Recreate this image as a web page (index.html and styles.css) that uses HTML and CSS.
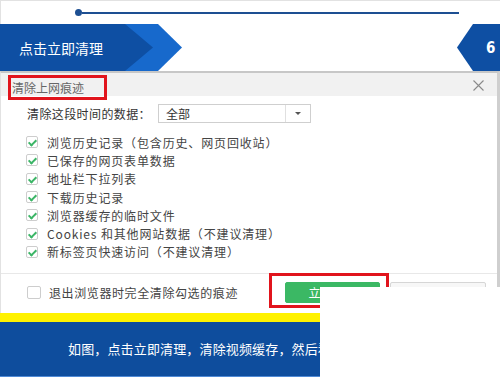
FILE: index.html
```html
<!DOCTYPE html>
<html lang="zh-CN">
<head>
    <meta charset="UTF-8">
    <meta name="viewport" content="width=device-width, initial-scale=1.0">
    <title>清除上网痕迹</title>
    <link rel="stylesheet" href="styles.css">
</head>
<body>
    <div class="progress">
        <span class="dot"></span>
        <span class="track"></span>
    </div>

    <div class="banner">
        <div class="step">
            <div class="step-inner">点击立即清理</div>
        </div>
        <div class="badge">6</div>
    </div>

    <div class="dialog">
        <div class="dialog-head">
            <span class="title">清除上网痕迹</span>
            <svg class="close" width="11" height="11" viewBox="0 0 11 11">
                <path d="M0.5 0.5 L10.5 10.5 M10.5 0.5 L0.5 10.5" stroke="#8a8a8a" stroke-width="1.1" fill="none"/>
            </svg>
        </div>

        <div class="dialog-body">
            <div class="range">
                <span class="range-label">清除这段时间的数据：</span>
                <div class="select">
                    <span class="select-value">全部</span>
                    <span class="select-arrow"><i class="caret"></i></span>
                </div>
            </div>

            <ul class="options">
                <li><span class="box checked"></span>浏览历史记录（包含历史、网页回收站）</li>
                <li><span class="box checked"></span>已保存的网页表单数据</li>
                <li><span class="box checked"></span>地址栏下拉列表</li>
                <li><span class="box checked"></span>下载历史记录</li>
                <li><span class="box checked"></span>浏览器缓存的临时文件</li>
                <li><span class="box checked"></span>Cookies 和其他网站数据（不建议清理）</li>
                <li><span class="box checked"></span>新标签页快速访问（不建议清理）</li>
            </ul>

            <div class="footer">
                <label class="exit-option"><span class="box"></span>退出浏览器时完全清除勾选的痕迹</label>
                <div class="actions">
                    <button class="btn btn-primary">立即清理</button>
                    <button class="btn">取消</button>
                </div>
            </div>
        </div>
    </div>

    <div class="stripe"></div>
    <div class="caption">如图，点击立即清理，清除视频缓存，然后看直播就不卡了</div>

    <!-- annotation overlays from the original screenshot -->
    <div class="mark"></div>
    <div class="patch"></div>
</body>
</html>
```

FILE: styles.css
```css
* {
    box-sizing: border-box;
}

body {
    margin: 0;
    width: 500px;
    height: 377px;
    overflow: hidden;
    position: relative;
    background: #fff;
    font-family: "Noto Sans CJK SC", "Noto Sans", sans-serif;
    color: #444;
}

/* top progress line */
.progress {
    height: 24px;
    display: flex;
    align-items: center;
    padding-left: 74px;
    border-top: 1px solid #e2e2e2;
    border-left: 1px solid #e2e2e2;
}
.dot {
    width: 7px;
    height: 7px;
    border-radius: 50%;
    background: #1d4f92;
}
.track {
    width: 377px;
    height: 2px;
    background: #1d4f92;
}

/* blue step banner */
.banner {
    height: 47px;
    display: flex;
    justify-content: space-between;
}
.step {
    width: 182px;
    height: 47px;
    background: #1769cc;
    clip-path: polygon(0 0, 158px 0, 182px 50%, 158px 100%, 0 100%);
}
.step-inner {
    width: 153px;
    height: 47px;
    background: #0e4fa3;
    clip-path: polygon(0 0, 125px 0, 153px 50%, 125px 100%, 0 100%);
    display: flex;
    align-items: center;
    padding-left: 19px;
    color: #fff;
    font-size: 14px;
}
.badge {
    width: 43px;
    height: 47px;
    background: #0e4fa3;
    clip-path: polygon(16px 0, 100% 0, 100% 100%, 16px 100%, 0 50%);
    color: #fff;
    font-family: "Liberation Sans Narrow", "DejaVu Sans Condensed", sans-serif;
    font-weight: bold;
    font-size: 15px;
    display: flex;
    align-items: center;
    padding-left: 29px;
}

/* dialog */
.dialog {
    height: 242px;
    border-top: 2px solid #c7c7c7;
    border-right: 3px solid #cfcfcf;
    border-left: 1px solid #e2e2e2;
}
.dialog-head {
    height: 23px;
    background: #f1f1f1;
    display: flex;
    justify-content: space-between;
    align-items: flex-start;
    padding: 2px 13px 0 7px;
}
.title {
    height: 25px;
    border: 3px solid #e1141c;
    padding: 0 20px 0 1px;
    font-size: 12px;
    line-height: 19px;
    color: #666;
}
.close {
    margin-top: 5px;
}

.dialog-body {
    padding-top: 8px;
}
.range {
    display: flex;
    align-items: center;
    padding-left: 26px;
    font-size: 12px;
}
.range-label {
    width: 131px;
    letter-spacing: 0.4px;
    color: #333;
}
.select {
    width: 153px;
    height: 19px;
    border: 1px solid #cfcfcf;
    display: flex;
}
.select-value {
    flex: 1;
    padding-left: 7px;
    line-height: 17px;
    color: #333;
}
.select-arrow {
    width: 25px;
    border-left: 1px solid #e0e0e0;
    display: flex;
    align-items: center;
    justify-content: center;
}
.caret {
    border-left: 3px solid transparent;
    border-right: 3px solid transparent;
    border-top: 3px solid #555;
}

.options {
    list-style: none;
    margin: 10px 0 0;
    padding: 0 0 0 25px;
}
.options li {
    height: 18.3px;
    display: flex;
    align-items: center;
    gap: 9px;
    font-size: 12px;
    letter-spacing: 0.85px;
    color: #444;
}

.box {
    width: 12px;
    height: 12px;
    border: 1px solid #cdcdcd;
    border-radius: 2px;
    background: #fff;
    position: relative;
    flex: none;
}
.box.checked::after {
    content: "";
    position: absolute;
    left: 3px;
    top: 1px;
    width: 3px;
    height: 6px;
    border-right: 2px solid #3bb566;
    border-bottom: 2px solid #3bb566;
    transform: rotate(45deg);
}

.footer {
    margin-top: 12px;
    height: 40px;
    border-top: 1px solid #e8e8e8;
    display: flex;
    align-items: flex-start;
    padding: 8px 11px 0 26px;
}
.exit-option {
    display: flex;
    align-items: center;
    gap: 8px;
    height: 21px;
    font-size: 12px;
    letter-spacing: 0.6px;
    color: #444;
}
.exit-option .box {
    width: 14px;
    height: 13px;
}
.actions {
    margin-left: auto;
    display: flex;
    gap: 10px;
}
.btn {
    width: 96px;
    height: 21px;
    padding: 0;
    border: 1px solid #d6d6d6;
    border-radius: 2px;
    background: #f7f7f7;
    font-family: inherit;
    font-size: 12px;
    color: #444;
}
.btn-primary {
    width: 95px;
    border-color: #3bb864;
    background: #3bb864;
    color: #fff;
}

/* bottom caption */
.stripe {
    height: 9px;
    background: #fff200;
}
.caption {
    height: 55px;
    background: #0e4d9d;
    border-bottom: 1px solid #4f8ad6;
    color: #fff;
    font-size: 13px;
    letter-spacing: 0.15px;
    line-height: 54px;
    padding-left: 68px;
    white-space: nowrap;
}

/* red highlight around the clean button */
.mark {
    position: absolute;
    left: 269px;
    top: 273px;
    width: 120px;
    height: 35px;
    border: 3px solid #e1141c;
}
/* blank area pasted over the screenshot corner */
.patch {
    position: absolute;
    left: 320px;
    top: 287px;
    right: 0;
    bottom: 0;
    background: #fff;
}
```
